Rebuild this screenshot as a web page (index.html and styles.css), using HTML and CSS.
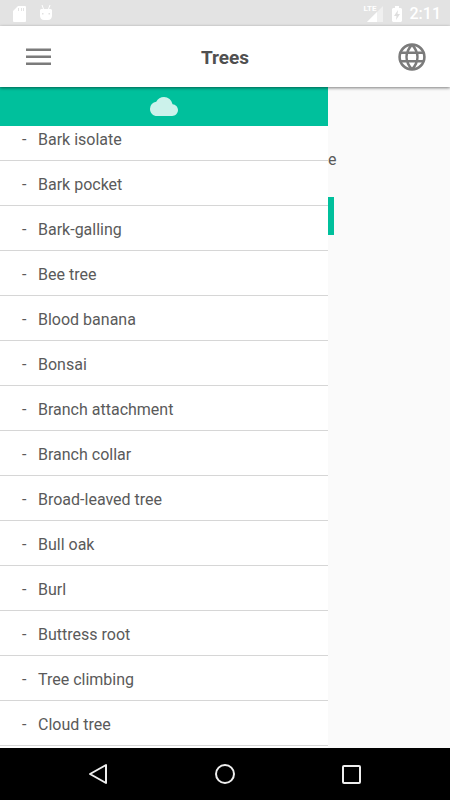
FILE: index.html
```html
<!DOCTYPE html>
<html lang="en">
<head>
<meta charset="utf-8">
<meta name="viewport" content="width=device-width, initial-scale=1">
<title>Trees</title>
<link rel="stylesheet" href="styles.css">
</head>
<body>
<div class="status">
  <div class="status-group notices">
    <svg width="14" height="18" viewBox="0 0 14 18" fill="#fff"><path fill-rule="evenodd" d="M5 1h7a1 1 0 0 1 1 1v14a1 1 0 0 1-1 1H1a1 1 0 0 1-1-1V6zM5 3v3h1V3zm3 0v3h1V3zm2 0v3h1V3z"/></svg>
    <svg width="14" height="18" viewBox="0 0 14 18"><path d="M3 0l1.500 4M11 0l-1.500 4" stroke="#fff"/><path fill="#fff" fill-rule="evenodd" d="M2 4h10l1 1v6q-.5 4-4 4H5q-3.500 0-4-4V5zM3 8v1.500h1.500V8zm6.500 0v1.500H11V8z"/></svg>
  </div>
  <div class="status-group">
    <div class="signal">
      <svg width="20" height="20" viewBox="0 0 20 20"><path fill="#f0f0f0" d="M19 2v16H3z"/><path fill="#fff" d="M13 8v10H3z"/></svg>
      <span class="network">LTE</span>
    </div>
    <svg width="10" height="17" viewBox="0 0 10 17"><path fill="#fff" d="M3 0h4v2h2l1 1v12l-1 1H1l-1-1V3l1-1h2z"/><path fill="#dedede" d="M6 4L2 10h2.500L4 14l4-6H5.500z"/></svg>
    <span class="clock">2:11</span>
  </div>
</div>
<header class="bar">
  <button class="icon-button" type="button" aria-label="Menu">
    <svg width="25" height="18" viewBox="0 0 25 18" fill="#7b7b7b"><path d="M0 .5h25V3H0zM0 7.500h25V10H0zM0 14.500h25V17H0z"/></svg>
  </button>
  <h1>Trees</h1>
  <button class="icon-button" type="button" aria-label="Language">
    <svg width="28" height="28" viewBox="0 0 28 28" fill="none" stroke="#7b7b7b" stroke-width="2.600"><circle cx="14" cy="14" r="12.400"/><path d="M2.500 9.800h23M2.500 18.200h23M14 1.600C6.800 9.500 6.800 18.500 14 26.400M14 1.600C21.200 9.500 21.200 18.500 14 26.400"/></svg>
  </button>
</header>
<main class="screen">
  <nav class="drawer" aria-label="Articles">
    <div class="drawer-head">
      <svg width="28" height="19" viewBox="0 0 24 16" preserveAspectRatio="none" fill="#ccf2eb"><path d="M19.350 6.040A7.490 7.490 0 0 0 12 0C9.110 0 6.600 1.640 5.350 4.040A5.994 5.994 0 0 0 0 10c0 3.310 2.690 6 6 6h13c2.760 0 5-2.240 5-5 0-2.640-2.050-4.780-4.650-4.960z"/></svg>
    </div>
    <ul class="list">
      <li><a href="#">Bark isolate</a></li>
      <li><a href="#">Bark pocket</a></li>
      <li><a href="#">Bark-galling</a></li>
      <li><a href="#">Bee tree</a></li>
      <li><a href="#">Blood banana</a></li>
      <li><a href="#">Bonsai</a></li>
      <li><a href="#">Branch attachment</a></li>
      <li><a href="#">Branch collar</a></li>
      <li><a href="#">Broad-leaved tree</a></li>
      <li><a href="#">Bull oak</a></li>
      <li><a href="#">Burl</a></li>
      <li><a href="#">Buttress root</a></li>
      <li><a href="#">Tree climbing</a></li>
      <li><a href="#">Cloud tree</a></li>
    </ul>
  </nav>
  <section class="content">
    <p>e</p>
    <div class="action"></div>
  </section>
</main>
<footer class="system">
  <button type="button" aria-label="Back"><svg width="22" height="22" viewBox="0 0 22 22"><path d="M18 2v18L2 11z"/></svg></button>
  <button type="button" aria-label="Home"><svg width="22" height="22" viewBox="0 0 22 22"><circle cx="11" cy="11" r="9"/></svg></button>
  <button type="button" aria-label="Overview"><svg width="22" height="22" viewBox="0 0 22 22"><rect x="3" y="3" width="17" height="17" rx="1"/></svg></button>
</footer>
</body>
</html>
```
FILE: styles.css
```css
* {
  box-sizing: border-box;
}

body {
  margin: 0;
  height: 100vh;
  display: flex;
  flex-direction: column;
  background: #fafafa;
  color: #5a5a5a;
  font-family: Roboto, "Liberation Sans", sans-serif;
  font-size: 16px;
  line-height: 20px;
}

svg {
  display: block;
}

button {
  border: 0;
  padding: 0;
  background: none;
}

.status {
  flex: none;
  height: 26px;
  padding: 2px 9px 0 13px;
  display: flex;
  align-items: center;
  justify-content: space-between;
  background: #e3e3e3;
}

.status-group {
  display: flex;
  align-items: center;
  gap: 8px;
}

.notices {
  gap: 12px;
}

.signal {
  position: relative;
}

.network {
  position: absolute;
  top: 0;
  left: 0;
  background: #e3e3e3;
  color: #fff;
  font-family: "Liberation Sans Narrow", Roboto, sans-serif;
  font-size: 8px;
  line-height: 9px;
  font-weight: 700;
}

.clock {
  color: #fff;
  font-weight: 500;
}

.bar {
  position: relative;
  z-index: 2;
  flex: none;
  height: 61px;
  padding: 0 24px;
  display: flex;
  align-items: center;
  justify-content: space-between;
  background: #fff;
  box-shadow: 0 1px 3px rgba(0, 0, 0, 0.5);
}

.bar h1 {
  margin: 0;
  padding-top: 2px;
  font-size: 19px;
  line-height: 24px;
  font-weight: 700;
  color: #505050;
}

.icon-button {
  width: 28px;
  height: 28px;
  display: grid;
  place-items: center;
}

.screen {
  flex: 1;
  min-height: 0;
  display: flex;
  overflow: hidden;
}

.drawer {
  flex: none;
  width: 72.9%;
  overflow: hidden;
  background: #fff;
}

.drawer-head {
  position: relative;
  z-index: 1;
  height: 39px;
  display: grid;
  place-items: center;
  background: #00c09c;
}

.list {
  margin: -10px 0 0;
  padding: 0;
  list-style: none;
}

.list a {
  height: 45px;
  padding: 3px 0 0 22px;
  display: flex;
  align-items: center;
  border-bottom: 1px solid #d6d6d6;
  color: inherit;
  text-decoration: none;
}

.list a::before {
  content: "-";
  width: 16px;
}

.content {
  flex: 1;
  padding-top: 63px;
}

.content p {
  margin: 0 0 27px;
}

.action {
  width: 6px;
  height: 38px;
  background: #00c09c;
}

.system {
  flex: none;
  height: 52px;
  display: flex;
  align-items: center;
  justify-content: center;
  gap: 104px;
  background: #000;
}

.system svg {
  fill: none;
  stroke: #eee;
  stroke-width: 2;
  stroke-linejoin: round;
}
```
